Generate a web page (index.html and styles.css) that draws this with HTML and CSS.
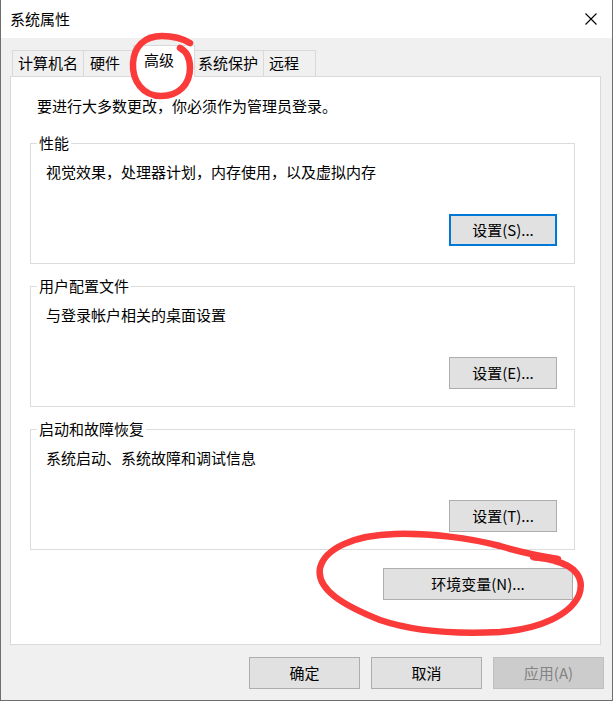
FILE: index.html
```html
<!DOCTYPE html>
<html lang="zh-CN">
<head>
<meta charset="utf-8">
<title>系统属性</title>
<link rel="stylesheet" href="styles.css">
</head>
<body>
<div class="window">
  <div class="titlebar">
    <span class="title">系统属性</span>
    <svg class="close" width="12" height="12" viewBox="0 0 12 12"><path d="M0.5 0.5 L11.5 11.5 M11.5 0.5 L0.5 11.5" stroke="#000" stroke-width="1.1" fill="none"/></svg>
  </div>
  <div class="body">
    <div class="tabs">
      <div class="tab tab-wide">计算机名</div>
      <div class="tab tab-narrow tab-hw">硬件</div>
      <div class="tab tab-active">高级</div>
      <div class="tab tab-wide">系统保护</div>
      <div class="tab tab-narrow">远程</div>
    </div>
    <div class="panel">
      <p class="note">要进行大多数更改，你必须作为管理员登录。</p>
      <div class="group">
        <span class="group-title">性能</span>
        <p class="group-desc">视觉效果，处理器计划，内存使用，以及虚拟内存</p>
        <button class="btn btn-set btn-focus">设置(S)...</button>
      </div>
      <div class="group">
        <span class="group-title">用户配置文件</span>
        <p class="group-desc">与登录帐户相关的桌面设置</p>
        <button class="btn btn-set">设置(E)...</button>
      </div>
      <div class="group group-last">
        <span class="group-title">启动和故障恢复</span>
        <p class="group-desc">系统启动、系统故障和调试信息</p>
        <button class="btn btn-set">设置(T)...</button>
      </div>
      <div class="env-row">
        <button class="btn btn-env">环境变量(N)...</button>
      </div>
    </div>
    <div class="footer">
      <button class="btn btn-foot">确定</button>
      <button class="btn btn-foot">取消</button>
      <button class="btn btn-foot btn-disabled" disabled>应用(A)</button>
    </div>
  </div>
  <svg class="marks" width="613" height="702" viewBox="0 0 613 702">
    <path d="M190 43 C185 40 176 36 162 36 C144 36 134 47 133 63 C132 81 143 96 161 96 C179 96 190 84 190 68 C190 57 186 51 180 48" />
    <path d="M558 559 C540 556 520 552 500 546 C470 538 430 533 395 534 C355 535 325 548 320 568 C316 590 345 606 380 620 C415 632 460 634 500 632 C540 629 570 615 579 595 C585 578 575 566 555 561 C545 558 538 558 533 557" />
  </svg>
</div>
</body>
</html>
```

FILE: styles.css
```css
* {
  box-sizing: border-box;
}

body {
  margin: 0;
  background: #ffffff;
  font-family: "Noto Sans CJK SC", "Noto Sans", sans-serif;
  font-size: 15px;
  color: #000;
}

.window {
  position: relative;
  width: 613px;
  height: 701px;
  border-left: 1px solid #6e6e6e;
  border-right: 1px solid #6e6e6e;
  border-bottom: 1px solid #6e6e6e;
  background: #f0f0f0;
  display: flex;
  flex-direction: column;
}

.titlebar {
  height: 38px;
  background: #fff;
  display: flex;
  align-items: center;
  justify-content: space-between;
  padding: 0 15px 0 9px;
}

.title {
  line-height: 20px;
}

.close {
  display: block;
}

.body {
  flex: 1;
  display: flex;
  flex-direction: column;
  padding: 12px 0 0 9px;
}

.tabs {
  display: flex;
  align-items: flex-end;
  height: 26px;
  margin-left: 2px;
  position: relative;
  z-index: 1;
}

.tab {
  height: 26px;
  border: 1px solid #d9d9d9;
  border-bottom: 0;
  margin-right: -1px;
  padding-left: 5px;
  line-height: 24px;
  background: #f0f0f0;
  white-space: nowrap;
}

.tab-wide {
  width: 72px;
}

.tab-narrow {
  width: 53px;
}

.tab-hw {
  padding-left: 6px;
}

.tab-active {
  position: relative;
  z-index: 2;
  width: 62px;
  height: 32px;
  margin-left: -2px;
  margin-right: -3px;
  margin-bottom: -1px;
  padding-left: 10px;
  line-height: 28px;
  background: #fff;
}

.panel {
  height: 569px;
  margin-right: 11px;
  background: #fff;
  border: 1px solid #d9d9d9;
  padding: 19px 25px 0 19px;
  display: flex;
  flex-direction: column;
}

.note {
  margin: 0 0 27px 7px;
  line-height: 20px;
}

.group {
  height: 121px;
  border: 1px solid #dcdcdc;
  display: flex;
  flex-direction: column;
  padding: 0 17px 17px 15px;
  margin-bottom: 22px;
}

.group-last {
  margin-bottom: 18px;
}

.group-title {
  align-self: flex-start;
  margin: -11px 0 0 -9px;
  padding: 0 2px;
  background: #fff;
  line-height: 20px;
}

.group-desc {
  margin: 9px 0 0 0;
  line-height: 20px;
}

.btn {
  font-family: inherit;
  font-size: 15px;
  color: #000;
  background: #e1e1e1;
  border: 1px solid #adadad;
  border-radius: 0;
  height: 32px;
  padding: 0;
  line-height: 20px;
}

.btn-set {
  margin-top: auto;
  align-self: flex-end;
  width: 108px;
}

.btn-focus {
  border: 2px solid #0078d7;
}

.env-row {
  display: flex;
  justify-content: flex-end;
  padding-right: 2px;
}

.btn-env {
  width: 190px;
}

.footer {
  display: flex;
  justify-content: flex-end;
  gap: 11px;
  margin-top: 12px;
  padding-right: 8px;
}

.btn-foot {
  width: 111px;
}

.btn-disabled {
  background: #cccccc;
  border-color: #bfbfbf;
  color: #838383;
}

.marks {
  position: absolute;
  left: -1px;
  top: 0;
  pointer-events: none;
  z-index: 5;
}

.marks path {
  fill: none;
  stroke: #fb3a3a;
  stroke-width: 6.5;
  stroke-linecap: round;
  stroke-linejoin: round;
}
```
